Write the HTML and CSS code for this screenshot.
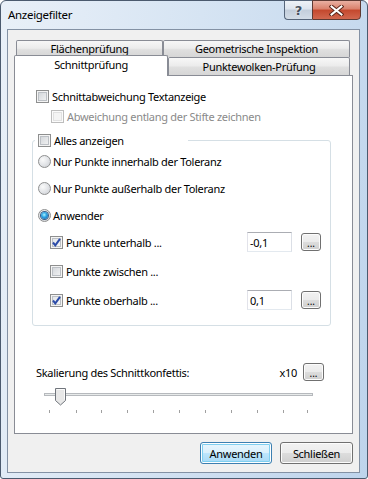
FILE: index.html
```html
<!DOCTYPE html>
<html lang="de">
<head>
  <meta charset="UTF-8">
  <title>Anzeigefilter</title>
  <link rel="stylesheet" href="styles.css">
</head>
<body>

  <div class="window">
    <!-- Titelleiste -->
    <div class="titlebar">
      <span class="title">Anzeigefilter</span>
      <div class="caption-btns">
        <span class="cap-help">?</span>
        <span class="cap-close">
          <svg width="15" height="11" viewBox="0 0 15 11">
            <path d="M2.5 1.5 L12.5 9.5 M12.5 1.5 L2.5 9.5" stroke="#5a2418" stroke-width="4" stroke-linecap="square"/>
            <path d="M2.5 1.5 L12.5 9.5 M12.5 1.5 L2.5 9.5" stroke="#ffffff" stroke-width="2" stroke-linecap="square"/>
          </svg>
        </span>
      </div>
    </div>

    <div class="client">
      <div class="tabs">
        <div class="tab-row back">
          <div class="tab t-flaechen">Flächenprüfung</div>
          <div class="tab t-geo">Geometrische Inspektion</div>
        </div>
        <div class="tab-row front">
          <div class="tab active t-schnitt">Schnittprüfung</div>
          <div class="tab t-punkte">Punktewolken-Prüfung</div>
        </div>
      </div>

      <div class="panel">
        <div class="row r-top"><span class="cb"></span><span class="lbl">Schnittabweichung Textanzeige</span></div>
        <div class="row r-sub disabled"><span class="cb"></span><span class="lbl">Abweichung entlang der Stifte zeichnen</span></div>

        <div class="group">
          <div class="group-title"><span class="cb"></span><span class="lbl">Alles anzeigen</span></div>
          <div class="row radio-row first"><span class="rb"></span><span class="lbl">Nur Punkte innerhalb der Toleranz</span></div>
          <div class="row radio-row"><span class="rb"></span><span class="lbl">Nur Punkte außerhalb der Toleranz</span></div>
          <div class="row radio-row"><span class="rb on"><span class="dot"></span></span><span class="lbl">Anwender</span></div>

          <div class="row sub-row first">
            <span class="cb checked">
              <svg width="11" height="11" viewBox="0 0 11 11"><path d="M2 5.5 L4.3 8.3 L9 1.8" fill="none" stroke="#2b4ba8" stroke-width="2"/></svg>
            </span>
            <span class="lbl grow">Punkte unterhalb ...</span>
            <span class="num">-0,1</span>
            <span class="dots">...</span>
          </div>
          <div class="row sub-row"><span class="cb"></span><span class="lbl grow">Punkte zwischen ...</span></div>
          <div class="row sub-row">
            <span class="cb checked">
              <svg width="11" height="11" viewBox="0 0 11 11"><path d="M2 5.5 L4.3 8.3 L9 1.8" fill="none" stroke="#2b4ba8" stroke-width="2"/></svg>
            </span>
            <span class="lbl grow">Punkte oberhalb ...</span>
            <span class="num">0,1</span>
            <span class="dots">...</span>
          </div>
        </div>

        <div class="row scale-row">
          <span class="grow">Skalierung des Schnittkonfettis:</span>
          <span class="factor">x10</span>
          <span class="dots">...</span>
        </div>

        <svg class="slider" width="290" height="32" viewBox="0 0 290 32">
          <rect x="4.5" y="11.5" width="268" height="2" fill="#e7eaea" stroke="#b6b9bd"/>
          <path d="M15.5 6.5 h10 v12 l-5 4.5 l-5 -4.5 z" fill="#e8e8e8" stroke="#70757c"/>
          <path d="M16.5 7.5 h8 v10" fill="none" stroke="#fbfbfb"/>
          <g stroke="#a0a0a0">
            <line x1="9.5" y1="28" x2="9.5" y2="31"/>
            <line x1="36.5" y1="28" x2="36.5" y2="31"/>
            <line x1="61.5" y1="28" x2="61.5" y2="31"/>
            <line x1="87.5" y1="28" x2="87.5" y2="31"/>
            <line x1="113.5" y1="28" x2="113.5" y2="31"/>
            <line x1="139.5" y1="28" x2="139.5" y2="31"/>
            <line x1="165.5" y1="28" x2="165.5" y2="31"/>
            <line x1="191.5" y1="28" x2="191.5" y2="31"/>
            <line x1="217.5" y1="28" x2="217.5" y2="31"/>
            <line x1="243.5" y1="28" x2="243.5" y2="31"/>
            <line x1="267.5" y1="28" x2="267.5" y2="31"/>
          </g>
        </svg>
      </div>

      <div class="dialog-btns">
        <button class="btn default">Anwenden</button>
        <button class="btn">Schließen</button>
      </div>
    </div>
  </div>

</body>
</html>
```

FILE: styles.css
```css
* { box-sizing: border-box; }

body {
  margin: 0;
  font-family: "Noto Sans", sans-serif;
  font-size: 11px;
  letter-spacing: -0.3px;
  color: #000;
  background: #fff;
}

.window {
  width: 368px; height: 479px;
  border: 1px solid #4b5a6e;
  border-radius: 6px 6px 3px 3px;
  padding: 0 7px 5px 6px;
  background: linear-gradient(100deg, #e9f0f8 0%, #d6e4f3 45%, #bed4ec 100%);
  display: flex;
  flex-direction: column;
}

/* Titelleiste */
.titlebar {
  height: 28px;
  display: flex;
  justify-content: space-between;
  align-items: flex-start;
}
.title {
  margin: 6px 0 0 1px;
  line-height: 16px;
  font-size: 11.5px;
}
.caption-btns { display: flex; margin: -1px -1px 0 0; }
.cap-help, .cap-close {
  height: 20px;
  display: flex; align-items: center; justify-content: center;
}
.cap-help {
  width: 28px;
  border: 1px solid #56657a; border-right: none;
  border-radius: 0 0 0 4px;
  background: linear-gradient(#eef2f7 0, #dde4ee 45%, #c3cedb 50%, #d3dce7 100%);
  color: #46505e;
  font-family: "DejaVu Sans", sans-serif;
  font-size: 13px;
  font-weight: bold;
  text-shadow: 0 0 2px #fff;
  letter-spacing: 0;
}
.cap-close {
  width: 49px;
  border: 1px solid #5e3a33;
  border-radius: 0 0 4px 0;
  background: linear-gradient(#eab0a2 0, #d9806b 45%, #c4482d 50%, #d1674f 100%);
}

/* Arbeitsbereich */
.client {
  flex: 1;
  border: 1px solid #8391a4;
  background: #f0f0f0;
  display: flex;
  flex-direction: column;
}

.tabs { margin: 10px 6px 0; }
.tab-row { display: flex; }
.tab-row.back { height: 17px; padding-left: 2px; }
.tab-row.front { height: 20px; margin-top: -2px; align-items: flex-end; }
.tab {
  border: 1px solid #898c95;
  border-bottom: none;
  border-radius: 2px 2px 0 0;
  background: linear-gradient(#f7f7f7 0, #ececec 45%, #dfdfdf 55%, #d6d6d6 100%);
  text-align: center;
  line-height: 16px;
}
.t-flaechen { width: 147px; height: 17px; }
.t-geo { width: 187px; height: 17px; }
.t-punkte { width: 182px; height: 18px; line-height: 17px; }
.tab.active {
  width: 154px; height: 21px;
  margin-bottom: -1px;
  padding-top: 1px;
  background: #fff;
  position: relative;
  z-index: 1;
}

.panel {
  height: 359px;
  margin: 0 6px;
  border: 1px solid #898c95;
  background: #fff;
  padding: 10px 21px 0 17px;
}

.row { display: flex; align-items: center; height: 20px; }
.lbl { margin-left: 3px; }
.grow { flex: 1; }
.r-top { padding-left: 4px; }
.r-sub { padding-left: 19px; }
.disabled { color: #8a8a8a; }

/* Checkbox / Radio im Win7-Stil */
.cb {
  width: 13px; height: 13px; flex: none;
  border: 1px solid #8e8f8f;
  background: linear-gradient(135deg, #cdd1d6 0%, #f7f7f7 100%);
  box-shadow: inset 0 0 0 1px #f4f4f4, inset 0 0 0 2px #bcc0c5;
  display: flex; align-items: center; justify-content: center;
}
.cb.checked { background: linear-gradient(135deg, #dfe2e6 0%, #fafafa 100%); }
.disabled .cb {
  border-color: #bdbdbd;
  background: #f4f4f4;
  box-shadow: inset 0 0 0 1px #fbfbfb, inset 0 0 0 2px #e1e1e1;
}
.rb {
  width: 13px; height: 13px; flex: none;
  border-radius: 50%;
  border: 1px solid #8e8f8f;
  background: radial-gradient(circle at 35% 35%, #fafafa 0, #e3e5e8 50%, #c9ccd1 100%);
  display: flex; align-items: center; justify-content: center;
}
.rb .dot {
  width: 7px; height: 7px;
  border-radius: 50%;
  background: radial-gradient(circle at 45% 40%, #aef4ff 0, #32a8e6 40%, #0b55a5 100%);
  box-shadow: 0 0 0 1px #3a5d86;
}

.group {
  margin: 14px 0 0 0;
  border: 1px solid #d5dfe5;
  border-radius: 3px;
  padding: 0 9px 13px 5px;
}
.group-title {
  display: flex; align-items: center;
  width: 153px; height: 14px;
  margin: -8px 0 0 -3px;
  padding-left: 3px;
  background: #fff;
}
.radio-row { height: 27px; }
.radio-row .lbl { margin-left: 2px; }
.radio-row.first { margin-top: 1px; }
.sub-row { height: 24px; margin-top: 5px; padding-left: 12px; }
.sub-row.first { margin-top: 1px; }

.num {
  width: 45px; height: 20px;
  border: 1px solid;
  border-color: #abadb3 #dbdfe6 #e3e9ef #e2e3ea;
  padding-left: 2px;
  display: flex; align-items: center;
  background: #fff;
}
.dots {
  width: 20px; height: 18px;
  margin-left: 9px;
  border: 1px solid #707070;
  border-radius: 3px;
  background: linear-gradient(#f2f2f2 0, #ebebeb 50%, #dddddd 50%, #cfcfcf 100%);
  box-shadow: inset 0 0 0 1px #fcfcfc;
  font-size: 10px;
  line-height: 19px;
  text-align: center;
  letter-spacing: 0;
}

.scale-row { margin-top: 36px; padding: 0 7px 0 4px; }
.scale-row .dots { width: 21px; margin-left: 6px; }
.slider { display: block; margin-left: 8px; }

/* Dialog-Buttons */
.dialog-btns {
  display: flex;
  justify-content: flex-end;
  gap: 8px;
  margin: 8px 6px 0;
}
.btn {
  width: 73px; height: 22px;
  border: 1px solid #707070;
  border-radius: 3px;
  background: linear-gradient(#f2f2f2 0, #ebebeb 50%, #dddddd 50%, #cfcfcf 100%);
  box-shadow: inset 0 0 0 1px #fcfcfc;
  font: inherit;
  letter-spacing: -0.3px;
  color: #000;
  padding: 0;
}
.btn.default {
  width: 72px;
  border-color: #3c7fb1;
  background: linear-gradient(#eaf6fd 0, #d9f0fc 50%, #bee6fd 50%, #a7d9f5 100%);
  box-shadow: inset 0 0 0 1px #ffffff, inset 0 0 0 2px #7fcff0;
}
```
